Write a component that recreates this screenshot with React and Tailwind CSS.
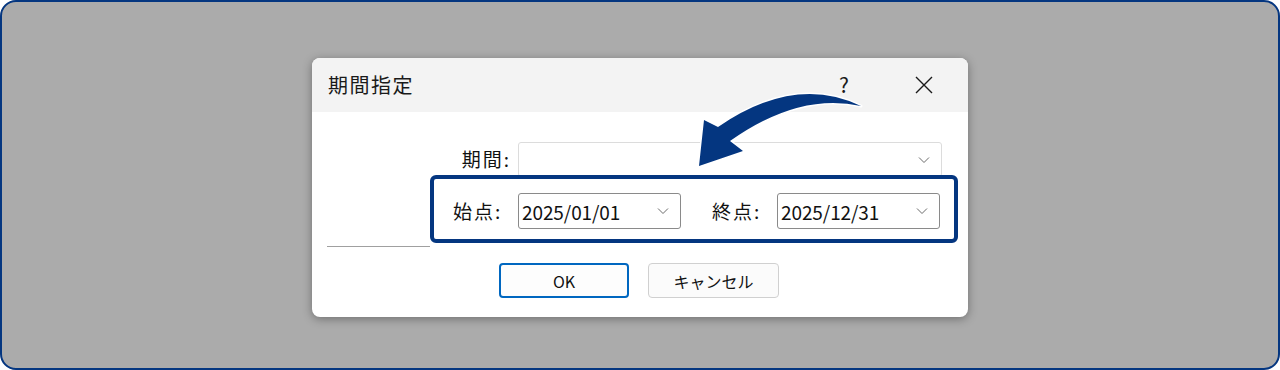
function Chevron({ className = "" }) {
  return (
    <svg width="12" height="8" viewBox="0 0 12 8" className={className}>
      <path d="M1 1.5 L6 6.5 L11 1.5" fill="none" stroke="#6b6b6b" strokeWidth="1" />
    </svg>
  );
}

function Combo({ value, width, faded }) {
  return (
    <div
      className={`flex h-[36px] items-center justify-between rounded-[3px] border bg-white pl-[3px] pr-[11px] ${
        faded ? "border-[#d9d9d9]" : "border-[#8a8a8a]"
      }`}
      style={{ width }}
    >
      <span className="text-[19px] leading-none tracking-[-0.1px] text-[#111]">{value}</span>
      <Chevron />
    </div>
  );
}

export default function App() {
  const font = { fontFamily: '"Noto Sans CJK JP", "Noto Sans", sans-serif' };
  return (
    <div
      className="relative flex h-[370px] w-[1280px] justify-center overflow-hidden rounded-[16px] border-2 border-[#043680] bg-[#ababab] pt-[56px]"
      style={font}
    >
      <div className="flex h-[259px] w-[656px] flex-col overflow-hidden rounded-[8px] bg-white shadow-[0_2px_10px_rgba(0,0,0,0.35)]">
        {/* title bar */}
        <div className="flex h-[54px] shrink-0 items-center bg-[#f3f3f3] pl-[16px]">
          <span className="text-[20px] tracking-[1.5px] text-[#1a1a1a]">期間指定</span>
          <span className="ml-auto mr-[66px] text-[21px] text-[#1a1a1a]">?</span>
          <svg width="18" height="18" viewBox="0 0 18 18" className="mr-[35px]">
            <path d="M1 1 L17 17 M17 1 L1 17" stroke="#1a1a1a" strokeWidth="1.4" />
          </svg>
        </div>

        {/* body */}
        <div className="flex flex-col">
          <div className="mt-[30px] flex items-center">
            <span className="w-[199px] text-right text-[19px] tracking-[2px] text-[#111]">期間:</span>
            <div className="ml-[7px] flex h-[35px] w-[424px] items-center justify-end rounded-[3px] border border-[#dcdcdc] pr-[11px]">
              <Chevron />
            </div>
          </div>

          <div className="relative z-10 ml-[118px] mt-[-2px] flex h-[68px] w-[528px] rounded-[6px] border-4 border-[#043680] bg-white pl-[19px] pt-[14px]">
            <span className="mt-[4px] w-[65px] text-[19px] tracking-[2px] text-[#111]">始点:</span>
            <Combo value="2025/01/01" width={163} />
            <span className="ml-[31px] mt-[4px] w-[65px] text-[19px] tracking-[2px] text-[#111]">終点:</span>
            <Combo value="2025/12/31" width={163} />
          </div>

          <div className="ml-[15px] mt-[3px] h-px w-[103px] bg-[#a0a0a0]" />

          <div className="ml-[187px] mt-[16px] flex gap-[19px]">
            <button className="h-[35px] w-[130px] rounded-[4px] border-2 border-[#0067c0] bg-[#fdfdfd] text-[16px] text-[#111]">
              OK
            </button>
            <button className="h-[35px] w-[131px] rounded-[4px] border border-[#d0d0d0] bg-[#fbfbfb] text-[16px] text-[#111]">
              キャンセル
            </button>
          </div>
        </div>
      </div>

      {/* curved arrow */}
      <svg
        className="absolute left-[688px] top-[78px] z-20"
        width="180"
        height="95"
        viewBox="688 80 180 95"
      >
        <path
          d="M859 106 Q793 74 716 127 L702 120 L697 166 L741 151 L728 141 Q797 92 859 106 Z"
          fill="#043680"
          stroke="#ffffff"
          strokeWidth="3"
          strokeLinejoin="round"
          paintOrder="stroke"
        />
      </svg>
    </div>
  );
}
